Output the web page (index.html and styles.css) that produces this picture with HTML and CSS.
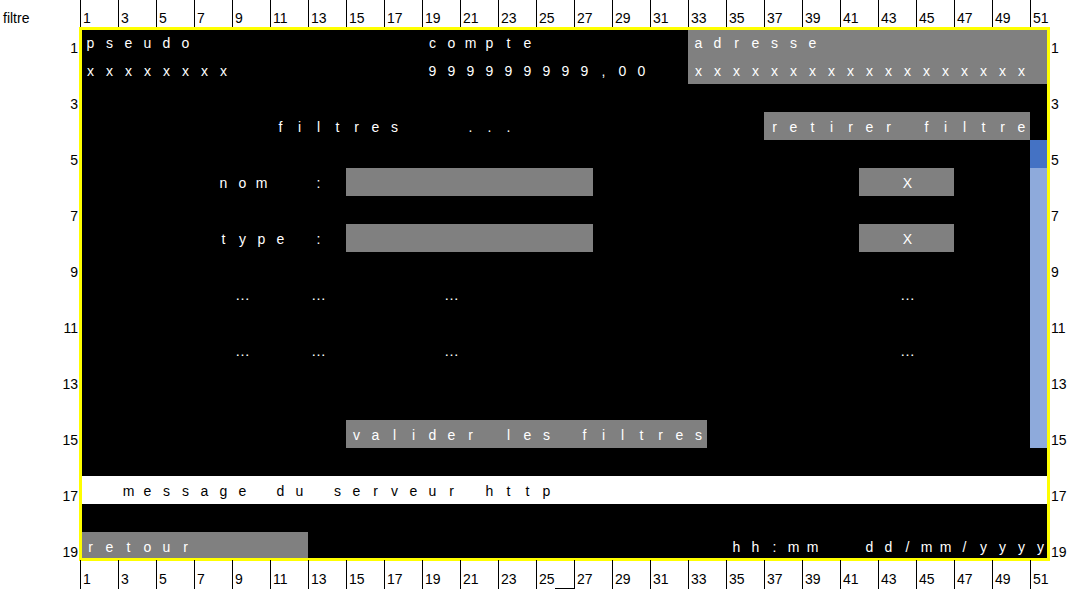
FILE: index.html
```html
<!DOCTYPE html>
<html lang="fr">
<head>
<meta charset="utf-8">
<title>filtre</title>
<link rel="stylesheet" href="styles.css">
</head>
<body>
<div class="page">
  <div class="corner">filtre</div>

  <div class="ruler ruler-top">
    <div class="rc">1</div><div class="rc">3</div><div class="rc">5</div><div class="rc">7</div><div class="rc">9</div><div class="rc">11</div><div class="rc">13</div><div class="rc">15</div><div class="rc">17</div><div class="rc">19</div><div class="rc">21</div><div class="rc">23</div><div class="rc">25</div><div class="rc">27</div><div class="rc">29</div><div class="rc">31</div><div class="rc">33</div><div class="rc">35</div><div class="rc">37</div><div class="rc">39</div><div class="rc">41</div><div class="rc">43</div><div class="rc">45</div><div class="rc">47</div><div class="rc">49</div><div class="rc">51</div>
  </div>

  <div class="rows rows-left">
    <div class="rl">1</div><div class="rl">3</div><div class="rl">5</div><div class="rl">7</div><div class="rl">9</div><div class="rl">11</div><div class="rl">13</div><div class="rl">15</div><div class="rl">17</div><div class="rl">19</div>
  </div>

  <div class="screen">
    <div class="txt pseudo-lbl"><span>p</span><span>s</span><span>e</span><span>u</span><span>d</span><span>o</span></div>
    <div class="txt pseudo-val"><span>x</span><span>x</span><span>x</span><span>x</span><span>x</span><span>x</span><span>x</span><span>x</span></div>
    <div class="txt acct-lbl"><span>c</span><span>o</span><span>m</span><span>p</span><span>t</span><span>e</span></div>
    <div class="txt acct-val"><span>9</span><span>9</span><span>9</span><span>9</span><span>9</span><span>9</span><span>9</span><span>9</span><span>9</span><span>,</span><span>0</span><span>0</span></div>

    <div class="box addr">
      <div class="txt"><span>a</span><span>d</span><span>r</span><span>e</span><span>s</span><span>s</span><span>e</span></div>
      <div class="txt"><span>x</span><span>x</span><span>x</span><span>x</span><span>x</span><span>x</span><span>x</span><span>x</span><span>x</span><span>x</span><span>x</span><span>x</span><span>x</span><span>x</span><span>x</span><span>x</span><span>x</span><span>x</span></div>
    </div>

    <div class="txt filt-title"><span>f</span><span>i</span><span>l</span><span>t</span><span>r</span><span>e</span><span>s</span></div>
    <div class="txt filt-dots"><span>.</span><span>.</span><span>.</span></div>

    <div class="box txt remove"><span>r</span><span>e</span><span>t</span><span>i</span><span>r</span><span>e</span><span>r</span><span></span><span>f</span><span>i</span><span>l</span><span>t</span><span>r</span><span>e</span></div>

    <div class="scroll"><div class="thumb"></div><div class="track"></div></div>

    <div class="txt lbl-nom"><span>n</span><span>o</span><span>m</span></div>
    <div class="txt colon-nom"><span>:</span></div>
    <div class="field field-nom"></div>
    <div class="box clear clear-nom">X</div>

    <div class="txt lbl-type"><span>t</span><span>y</span><span>p</span><span>e</span></div>
    <div class="txt colon-type"><span>:</span></div>
    <div class="field field-type"></div>
    <div class="box clear clear-type">X</div>

    <div class="txt more r10 c9"><span>…</span></div>
    <div class="txt more r10 c13"><span>…</span></div>
    <div class="txt more r10 c20"><span>…</span></div>
    <div class="txt more r10 c44"><span>…</span></div>
    <div class="txt more r12 c9"><span>…</span></div>
    <div class="txt more r12 c13"><span>…</span></div>
    <div class="txt more r12 c20"><span>…</span></div>
    <div class="txt more r12 c44"><span>…</span></div>

    <div class="box txt validate"><span>v</span><span>a</span><span>l</span><span>i</span><span>d</span><span>e</span><span>r</span><span></span><span>l</span><span>e</span><span>s</span><span></span><span>f</span><span>i</span><span>l</span><span>t</span><span>r</span><span>e</span><span>s</span></div>

    <div class="txt msg"><span>m</span><span>e</span><span>s</span><span>s</span><span>a</span><span>g</span><span>e</span><span></span><span>d</span><span>u</span><span></span><span>s</span><span>e</span><span>r</span><span>v</span><span>e</span><span>u</span><span>r</span><span></span><span>h</span><span>t</span><span>t</span><span>p</span></div>

    <div class="box txt back"><span>r</span><span>e</span><span>t</span><span>o</span><span>u</span><span>r</span></div>

    <div class="txt clock"><span>h</span><span>h</span><span>:</span><span>m</span><span>m</span></div>
    <div class="txt date"><span>d</span><span>d</span><span>/</span><span>m</span><span>m</span><span>/</span><span>y</span><span>y</span><span>y</span><span>y</span></div>
  </div>

  <div class="rows rows-right">
    <div class="rl">1</div><div class="rl">3</div><div class="rl">5</div><div class="rl">7</div><div class="rl">9</div><div class="rl">11</div><div class="rl">13</div><div class="rl">15</div><div class="rl">17</div><div class="rl">19</div>
  </div>

  <div class="ruler ruler-bottom">
    <div class="rc">1</div><div class="rc">3</div><div class="rc">5</div><div class="rc">7</div><div class="rc">9</div><div class="rc">11</div><div class="rc">13</div><div class="rc">15</div><div class="rc">17</div><div class="rc">19</div><div class="rc">21</div><div class="rc">23</div><div class="rc mark">25</div><div class="rc">27</div><div class="rc">29</div><div class="rc">31</div><div class="rc">33</div><div class="rc">35</div><div class="rc">37</div><div class="rc">39</div><div class="rc">41</div><div class="rc">43</div><div class="rc">45</div><div class="rc">47</div><div class="rc">49</div><div class="rc">51</div>
  </div>
</div>
</body>
</html>
```

FILE: styles.css
```css
html, body {
  margin: 0;
  padding: 0;
  background: #ffffff;
}

body {
  font-family: "Liberation Sans", Arial, sans-serif;
  font-size: 14px;
  color: #000000;
}

.page {
  display: grid;
  grid-template-columns: 80px 969px 28px;
  grid-template-rows: 28px 532px 29px;
  width: 1077px;
  height: 589px;
  overflow: hidden;
}

/* top-left label */
.corner {
  grid-column: 1;
  grid-row: 1;
  padding: 10px 0 0 3px;
  line-height: 16px;
}

/* column rulers */
.ruler {
  display: flex;
  grid-column: 2 / 4;
}

.ruler-top {
  grid-row: 1;
}

.ruler-bottom {
  grid-row: 3;
}

.rc {
  flex: 0 0 38px;
  box-sizing: border-box;
  border-left: 1px solid #000000;
  padding-left: 2px;
  line-height: 16px;
}

.ruler-top .rc {
  padding-top: 10px;
}

.ruler-bottom .rc {
  padding-top: 11px;
}

.rc.mark {
  background: linear-gradient(#000000, #000000) no-repeat right bottom / 19px 1px;
}

/* row labels */
.rows {
  grid-row: 2;
  display: flex;
  flex-direction: column;
  min-height: 0;
}

.rows-left {
  grid-column: 1;
  text-align: right;
}

.rows-right {
  grid-column: 3;
  text-align: left;
}

.rl {
  flex: 0 0 56px;
  box-sizing: border-box;
  padding-top: 12px;
  line-height: 16px;
}

.rows-left .rl {
  padding-right: 2px;
}

.rows-right .rl {
  padding-left: 2px;
}

/* the terminal screen */
.screen {
  grid-column: 2;
  grid-row: 2;
  display: grid;
  grid-template-columns: repeat(51, 19px);
  grid-template-rows: repeat(19, 28px);
  background: #000000;
  color: #ffffff;
  outline: 3px solid #ffff00;
  outline-offset: -2px;
}

.txt {
  display: flex;
  height: 28px;
}

.txt span {
  flex: 0 0 19px;
  box-sizing: border-box;
  padding: 7px 0 0 2px;
  line-height: 16px;
  text-align: center;
}

.box {
  background: #808080;
}

.pseudo-lbl { grid-column: 1 / span 6; grid-row: 1; }
.pseudo-val { grid-column: 1 / span 8; grid-row: 2; }
.acct-lbl { grid-column: 19 / span 6; grid-row: 1; }
.acct-val { grid-column: 19 / span 12; grid-row: 2; }

.addr {
  grid-column: 33 / 52;
  grid-row: 1 / 3;
}

.filt-title { grid-column: 11 / span 7; grid-row: 4; }
.filt-dots { grid-column: 21 / span 3; grid-row: 4; }

.remove {
  grid-column: 37 / 51;
  grid-row: 4;
}

.scroll {
  grid-column: 51;
  grid-row: 5 / 16;
  display: flex;
  flex-direction: column;
}

.thumb {
  height: 28px;
  background: #4472c4;
}

.track {
  flex: 1;
  background: #8eaadb;
}

.lbl-nom { grid-column: 8 / span 3; grid-row: 6; }
.colon-nom { grid-column: 13; grid-row: 6; }
.lbl-type { grid-column: 8 / span 4; grid-row: 8; }
.colon-type { grid-column: 13; grid-row: 8; }

.field {
  background: #808080;
  grid-column: 15 / 28;
}

.field-nom { grid-row: 6; }
.field-type { grid-row: 8; }

.clear {
  grid-column: 42 / 47;
  box-sizing: border-box;
  padding: 7px 0 0 2px;
  line-height: 16px;
  text-align: center;
}

.clear-nom { grid-row: 6; }
.clear-type { grid-row: 8; }

.r10 { grid-row: 10; }
.r12 { grid-row: 12; }
.c9 { grid-column: 9; }
.c13 { grid-column: 13; }
.c20 { grid-column: 20; }
.c44 { grid-column: 44; }

.more span {
  font-size: 15px;
}

.validate {
  grid-column: 15 / 34;
  grid-row: 15;
}

.msg {
  grid-column: 1 / 52;
  grid-row: 17;
  background: #ffffff;
  color: #000000;
  padding-left: 38px;
}

.back {
  grid-column: 1 / 13;
  grid-row: 19;
}

.clock { grid-column: 35 / span 5; grid-row: 19; }
.date { grid-column: 42 / span 10; grid-row: 19; }
```
